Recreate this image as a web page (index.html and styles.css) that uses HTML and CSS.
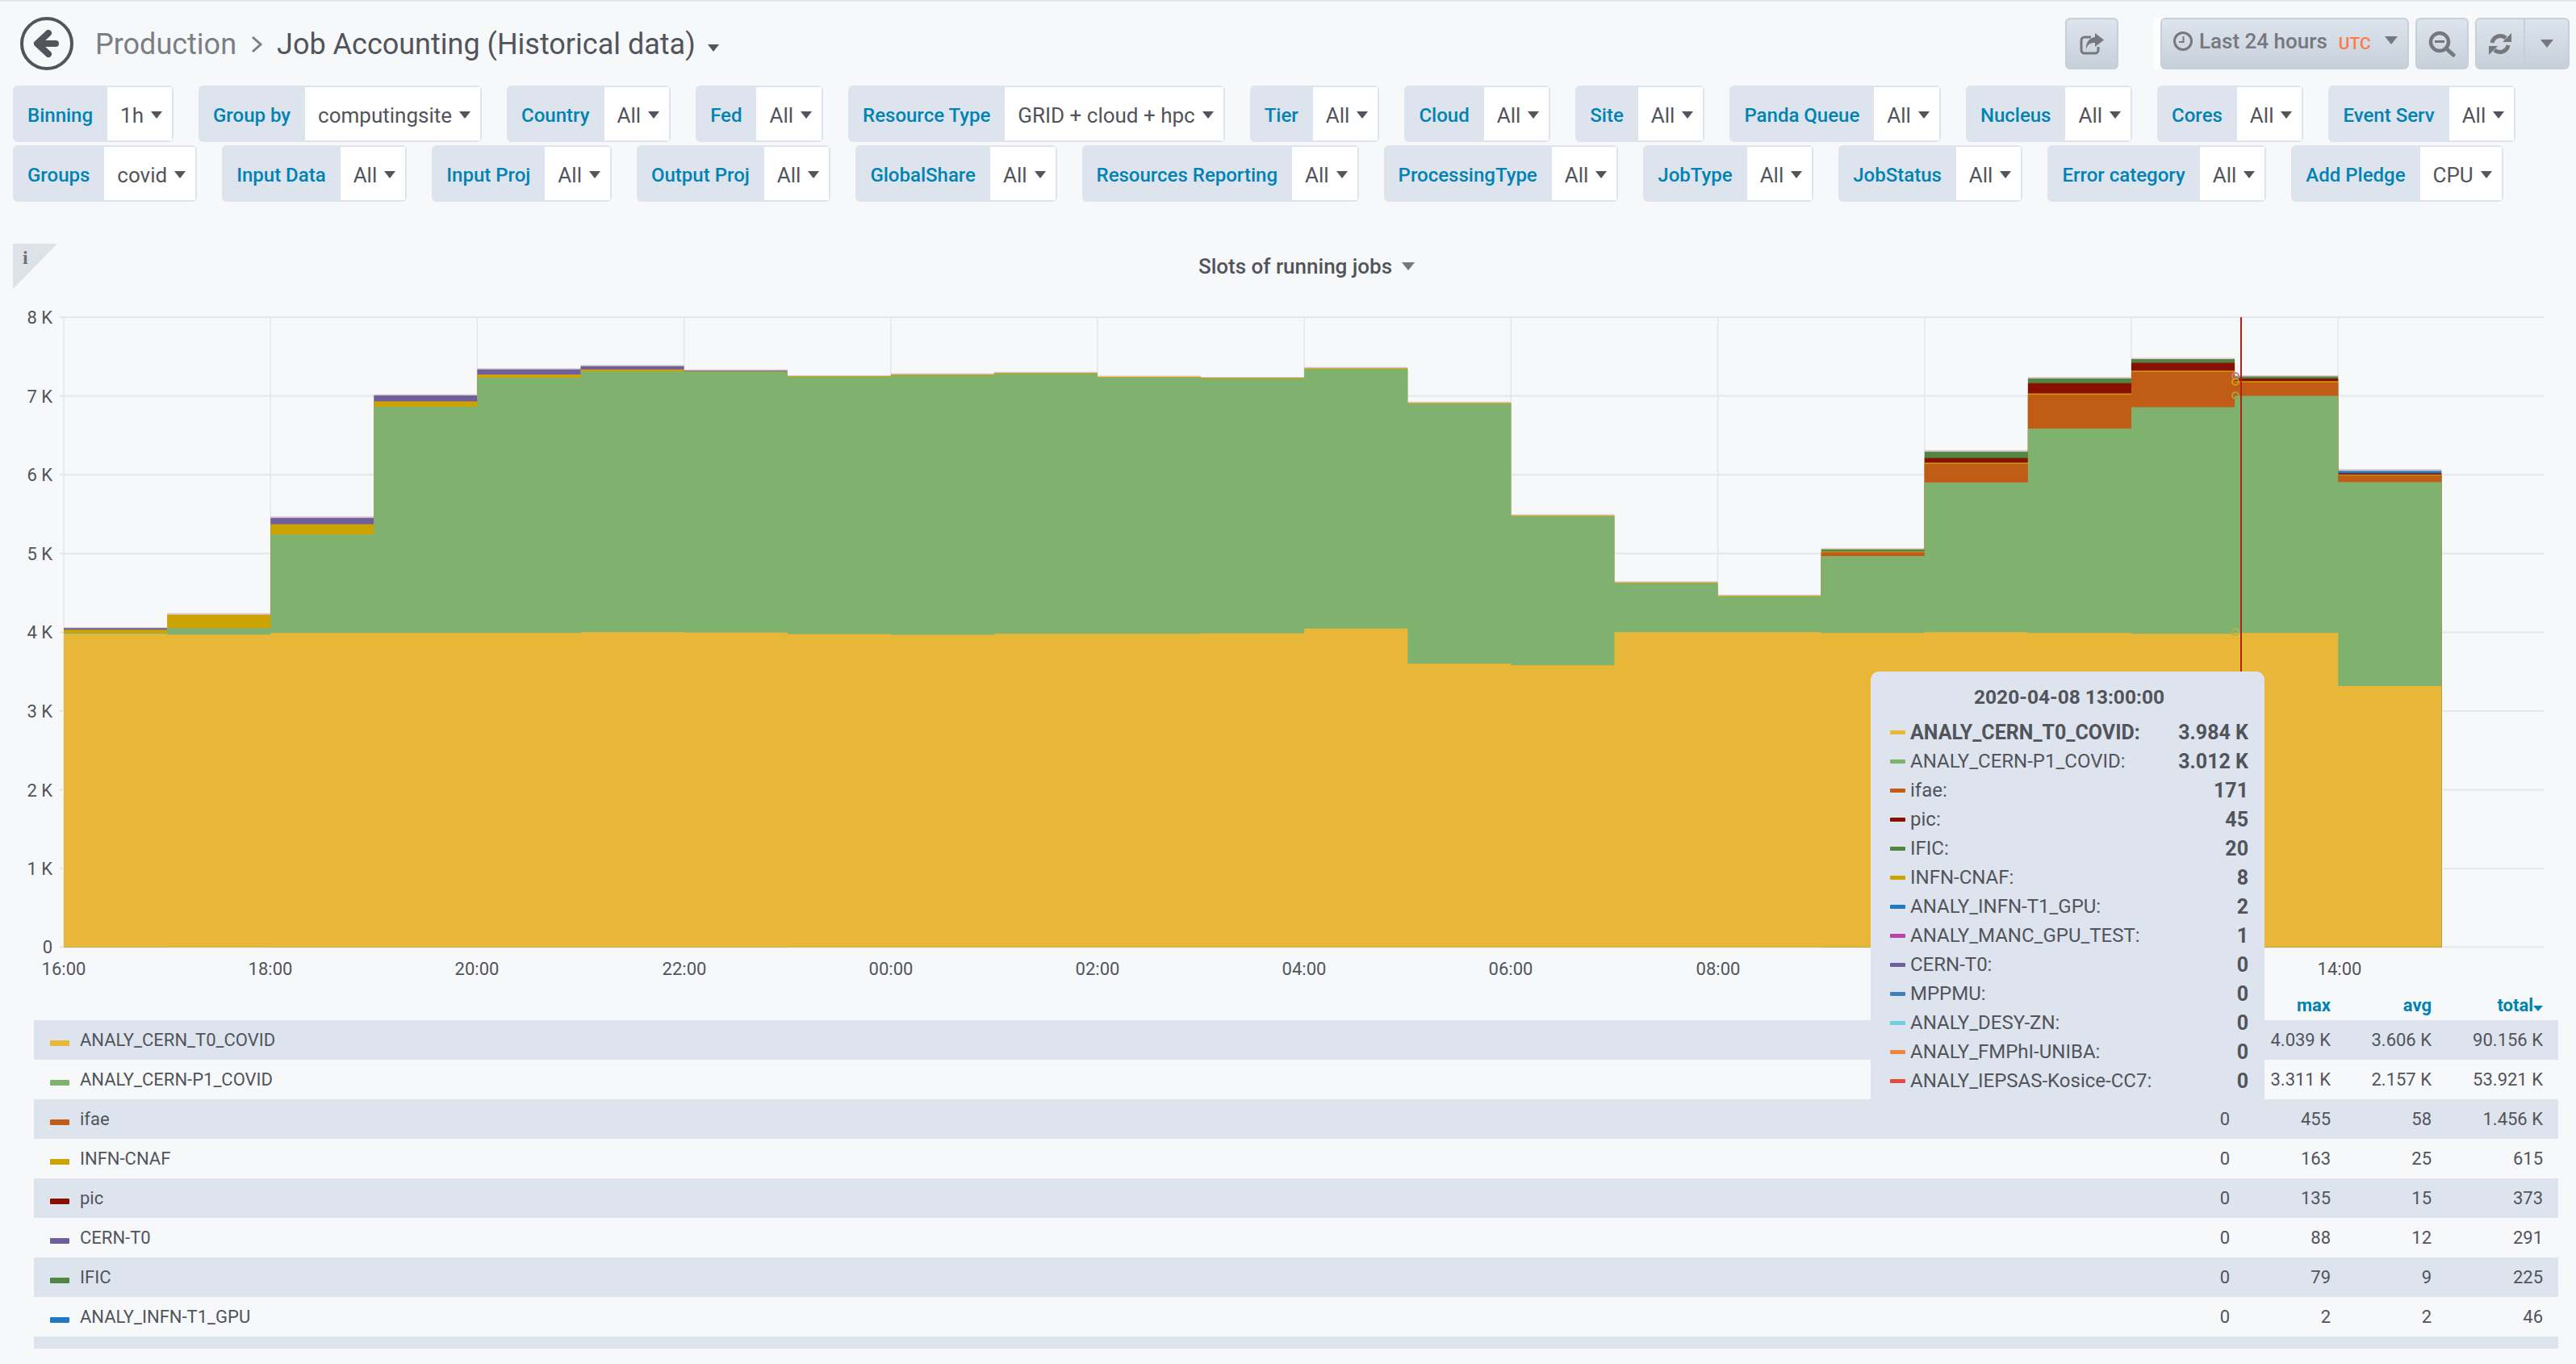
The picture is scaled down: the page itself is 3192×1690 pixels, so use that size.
FILE: index.html
```html
<!DOCTYPE html>
<html lang="en">
<head>
  <meta charset="UTF-8">
  <title>Job Accounting (Historical data)</title>
  <link rel="stylesheet" href="styles.css">
</head>
<body>
  <div class="top-line"></div>

  <div class="navbar">
    <svg class="back-icon" viewBox="0 0 66 68" width="66" height="68">
      <circle cx="33" cy="34" r="31" fill="none" stroke="#52545c" stroke-width="4"/>
      <path d="M35 21 L21 34 L35 47 M21 34 H44" fill="none" stroke="#52545c" stroke-width="8" stroke-linecap="round" stroke-linejoin="round"/>
    </svg>
    <span class="crumb">Production</span>
    <svg class="chevron" viewBox="0 0 14 22" width="14" height="22">
      <path d="M2 2 L12 11 L2 20" fill="none" stroke="#7b7e85" stroke-width="3"/>
    </svg>
    <span class="dash-title">Job Accounting (Historical data)</span>
    <i class="caret title-caret"></i>

    <div class="nav-actions">
      <button class="nav-btn share-btn">
        <svg viewBox="0 0 30 27" width="30" height="27">
          <path d="M14 5 H6 a4 4 0 0 0 -4 4 V21 a4 4 0 0 0 4 4 H19 a4 4 0 0 0 4 -4 V17" fill="none" stroke="#76787e" stroke-width="3"/>
          <path d="M19 0 L30 8.5 L19 17 V12 C13 12 9 14 8 21 C7 12 12 5.5 19 5 Z" fill="#76787e"/>
        </svg>
      </button>
      <div class="time-wrap">
        <button class="nav-btn time-btn">
          <svg class="clock" viewBox="0 0 24 24" width="24" height="24">
            <circle cx="12" cy="12" r="10.5" fill="none" stroke="#76787e" stroke-width="3"/>
            <path d="M12.5 6 V13 H7" fill="none" stroke="#76787e" stroke-width="2"/>
          </svg>
          <span class="time-text">Last 24 hours</span>
          <span class="utc">UTC</span>
          <i class="caret btn-caret time-caret"></i>
        </button>
      </div>
      <button class="nav-btn zoom-btn">
        <svg viewBox="0 0 36 36" width="36" height="36">
          <circle cx="16" cy="16" r="11" fill="none" stroke="#76787e" stroke-width="4.5"/>
          <path d="M24 24 L33 32" stroke="#76787e" stroke-width="5" stroke-linecap="round"/>
          <path d="M10 15.5 H22" stroke="#76787e" stroke-width="3"/>
        </svg>
      </button>
      <div class="nav-btn refresh-group">
        <span class="refresh-part">
          <svg viewBox="0 0 28 27" width="28" height="27">
            <path d="M4 12 A10.5 10.5 0 0 1 21 6" fill="none" stroke="#76787e" stroke-width="5"/>
            <path d="M28 0 V11 H17 Z" fill="#76787e"/>
            <path d="M24 15 A10.5 10.5 0 0 1 7 21" fill="none" stroke="#76787e" stroke-width="5"/>
            <path d="M0 27 V16 H11 Z" fill="#76787e"/>
          </svg>
        </span>
        <span class="refresh-caret"><i class="caret btn-caret"></i></span>
      </div>
    </div>
  </div>

  <div class="filter-row">
    <div class="filter"><span class="filter-label">Binning</span><span class="filter-value">1h<i class="caret"></i></span></div>
    <div class="filter"><span class="filter-label">Group by</span><span class="filter-value">computingsite<i class="caret"></i></span></div>
    <div class="filter"><span class="filter-label">Country</span><span class="filter-value">All<i class="caret"></i></span></div>
    <div class="filter"><span class="filter-label">Fed</span><span class="filter-value">All<i class="caret"></i></span></div>
    <div class="filter"><span class="filter-label">Resource Type</span><span class="filter-value">GRID + cloud + hpc<i class="caret"></i></span></div>
    <div class="filter"><span class="filter-label">Tier</span><span class="filter-value">All<i class="caret"></i></span></div>
    <div class="filter"><span class="filter-label">Cloud</span><span class="filter-value">All<i class="caret"></i></span></div>
    <div class="filter"><span class="filter-label">Site</span><span class="filter-value">All<i class="caret"></i></span></div>
    <div class="filter"><span class="filter-label">Panda Queue</span><span class="filter-value">All<i class="caret"></i></span></div>
    <div class="filter"><span class="filter-label">Nucleus</span><span class="filter-value">All<i class="caret"></i></span></div>
    <div class="filter"><span class="filter-label">Cores</span><span class="filter-value">All<i class="caret"></i></span></div>
    <div class="filter"><span class="filter-label">Event Serv</span><span class="filter-value">All<i class="caret"></i></span></div>
  </div>
  <div class="filter-row">
    <div class="filter"><span class="filter-label">Groups</span><span class="filter-value">covid<i class="caret"></i></span></div>
    <div class="filter"><span class="filter-label">Input Data</span><span class="filter-value">All<i class="caret"></i></span></div>
    <div class="filter"><span class="filter-label">Input Proj</span><span class="filter-value">All<i class="caret"></i></span></div>
    <div class="filter"><span class="filter-label">Output Proj</span><span class="filter-value">All<i class="caret"></i></span></div>
    <div class="filter"><span class="filter-label">GlobalShare</span><span class="filter-value">All<i class="caret"></i></span></div>
    <div class="filter"><span class="filter-label">Resources Reporting</span><span class="filter-value">All<i class="caret"></i></span></div>
    <div class="filter"><span class="filter-label">ProcessingType</span><span class="filter-value">All<i class="caret"></i></span></div>
    <div class="filter"><span class="filter-label">JobType</span><span class="filter-value">All<i class="caret"></i></span></div>
    <div class="filter"><span class="filter-label">JobStatus</span><span class="filter-value">All<i class="caret"></i></span></div>
    <div class="filter"><span class="filter-label">Error category</span><span class="filter-value">All<i class="caret"></i></span></div>
    <div class="filter"><span class="filter-label">Add Pledge</span><span class="filter-value">CPU<i class="caret"></i></span></div>
  </div>

  <div class="panel">
    <div class="info-corner"><span>i</span></div>
    <div class="panel-title">Slots of running jobs<i class="caret panel-caret"></i></div>

    <svg class="chart" viewBox="0 0 3192 862" width="3192" height="862">
      <path class="grid" d="M74 35H3152M74 132.6H3152M74 230.2H3152M74 327.8H3152M74 425.4H3152M74 523H3152M74 620.6H3152M74 718.2H3152M74 815.6H3152"/>
      <path class="grid grid-v" d="M79 35V816M335.2 35V816M591.4 35V816M847.6 35V816M1103.8 35V816M1360 35V816M1616.2 35V816M1872.4 35V816M2128.6 35V816M2384.8 35V816M2641 35V816M2897.2 35V816"/>

      <!-- x is hours from 16:00, y is thousands of slots, stacked series painted top down -->
      <g transform="translate(79 815.6) scale(128.1 -97.6)">
        <path fill="#d8c6c8" d="M0 0V4.06H1V4.24H2V5.47H3V7.02H4V7.35H5V7.39H6V7.335H7V7.26H8V7.285H9V7.305H10V7.255H11V7.24H12V7.365H13V6.925H14V5.495H15V4.645H16V4.475H17V5.065H18V6.31H19V7.24H20V7.48H21V7.26H22V6.07H23V0Z"/>
        <path fill="#1f78c1" d="M22 0V6.045H23V0Z"/>
        <path fill="#705da0" d="M0 0V4.05H1V0H2V5.45H3V7.005H4V7.335H5V7.375H6V7.32H7V0Z"/>
        <path fill="#508642" d="M17 0V5.05H18V6.29H19V7.22H20V7.465H21V7.245H22V0Z"/>
        <path fill="#890f02" d="M18 0V6.21H19V7.16H20V7.42H21V7.22H22V6.015H23V0Z"/>
        <path fill="#cca300" d="M0 0V4.03H1V4.22H2V5.37H3V6.93H4V7.27H5V7.335H6V7.31H7V7.25H8V7.27H9V7.29H10V7.24H11V7.23H12V7.35H13V6.91H14V5.48H15V4.63H16V4.46H17V5.025H18V6.15H19V7.03H20V7.32H21V7.185H22V6H23V0Z"/>
        <path fill="#c15c17" d="M17 0V5.015H18V6.135H19V7.015H20V7.305H21V7.17H22V5.99H23V0Z"/>
        <path fill="#80b26f" d="M0 0V3.99H1V4.05H2V5.24H3V6.86H4V7.23H5V7.31H6V7.305H7V7.24H8V7.26H9V7.28H10V7.23H11V7.22H12V7.34H13V6.9H14V5.47H15V4.62H16V4.45H17V4.965H18V5.9H19V6.585H20V6.855H21V7H22V5.905H23V0Z"/>
        <path fill="#e8b738" d="M0 0V3.98H1V3.97H2V3.99H5V4H6V3.995H7V3.975H8V3.965H9V3.98H11V3.985H12V4.046H13V3.6H14V3.58H15V4H17V3.99H18V4H19V3.99H20V3.98H21V3.99H22V3.315H23V0Z"/>
      </g>

      <path class="crosshair" d="M2777 35V815"/>
      <circle class="hover-dot" cx="2770" cy="108" r="4" stroke="#c77b90"/>
      <circle class="hover-dot" cx="2770" cy="115" r="4" stroke="#cc9a10"/>
      <circle class="hover-dot" cx="2770" cy="132" r="4" stroke="#a8a040"/>
      <circle class="hover-dot" cx="2770" cy="425" r="4" stroke="#b8b048"/>

      <g class="y-axis">
        <text x="65" y="43">8 K</text>
        <text x="65" y="141">7 K</text>
        <text x="65" y="238">6 K</text>
        <text x="65" y="336">5 K</text>
        <text x="65" y="433">4 K</text>
        <text x="65" y="531">3 K</text>
        <text x="65" y="629">2 K</text>
        <text x="65" y="726">1 K</text>
        <text x="65" y="823">0</text>
      </g>
      <g class="x-axis">
        <text x="79" y="850">16:00</text>
        <text x="335" y="850">18:00</text>
        <text x="591" y="850">20:00</text>
        <text x="848" y="850">22:00</text>
        <text x="1104" y="850">00:00</text>
        <text x="1360" y="850">02:00</text>
        <text x="1616" y="850">04:00</text>
        <text x="1872" y="850">06:00</text>
        <text x="2129" y="850">08:00</text>
        <text x="2899" y="850">14:00</text>
      </g>
    </svg>

    <div class="legend">
      <div class="legend-head">
        <span class="legend-name"></span>
        <span class="legend-num"></span>
        <span class="legend-num">max</span>
        <span class="legend-num">avg</span>
        <span class="legend-num legend-total">total<i class="caret total-caret"></i></span>
      </div>
      <div class="legend-row">
        <span class="legend-key s-t0"></span><span class="legend-name">ANALY_CERN_T0_COVID</span>
        <span class="legend-num"></span><span class="legend-num">4.039 K</span><span class="legend-num">3.606 K</span><span class="legend-num legend-total">90.156 K</span>
      </div>
      <div class="legend-row">
        <span class="legend-key s-p1"></span><span class="legend-name">ANALY_CERN-P1_COVID</span>
        <span class="legend-num"></span><span class="legend-num">3.311 K</span><span class="legend-num">2.157 K</span><span class="legend-num legend-total">53.921 K</span>
      </div>
      <div class="legend-row">
        <span class="legend-key s-ifae"></span><span class="legend-name">ifae</span>
        <span class="legend-num">0</span><span class="legend-num">455</span><span class="legend-num">58</span><span class="legend-num legend-total">1.456 K</span>
      </div>
      <div class="legend-row">
        <span class="legend-key s-cnaf"></span><span class="legend-name">INFN-CNAF</span>
        <span class="legend-num">0</span><span class="legend-num">163</span><span class="legend-num">25</span><span class="legend-num legend-total">615</span>
      </div>
      <div class="legend-row">
        <span class="legend-key s-pic"></span><span class="legend-name">pic</span>
        <span class="legend-num">0</span><span class="legend-num">135</span><span class="legend-num">15</span><span class="legend-num legend-total">373</span>
      </div>
      <div class="legend-row">
        <span class="legend-key s-cern"></span><span class="legend-name">CERN-T0</span>
        <span class="legend-num">0</span><span class="legend-num">88</span><span class="legend-num">12</span><span class="legend-num legend-total">291</span>
      </div>
      <div class="legend-row">
        <span class="legend-key s-ific"></span><span class="legend-name">IFIC</span>
        <span class="legend-num">0</span><span class="legend-num">79</span><span class="legend-num">9</span><span class="legend-num legend-total">225</span>
      </div>
      <div class="legend-row">
        <span class="legend-key s-gpu"></span><span class="legend-name">ANALY_INFN-T1_GPU</span>
        <span class="legend-num">0</span><span class="legend-num">2</span><span class="legend-num">2</span><span class="legend-num legend-total">46</span>
      </div>
      <div class="legend-row"></div>
    </div>

    <div class="tooltip">
      <div class="tooltip-title">2020-04-08 13:00:00</div>
      <div class="tooltip-row tooltip-hover"><span class="tooltip-key s-t0"></span><span class="tooltip-name">ANALY_CERN_T0_COVID:</span><b>3.984 K</b></div>
      <div class="tooltip-row"><span class="tooltip-key s-p1"></span><span class="tooltip-name">ANALY_CERN-P1_COVID:</span><b>3.012 K</b></div>
      <div class="tooltip-row"><span class="tooltip-key s-ifae"></span><span class="tooltip-name">ifae:</span><b>171</b></div>
      <div class="tooltip-row"><span class="tooltip-key s-pic"></span><span class="tooltip-name">pic:</span><b>45</b></div>
      <div class="tooltip-row"><span class="tooltip-key s-ific"></span><span class="tooltip-name">IFIC:</span><b>20</b></div>
      <div class="tooltip-row"><span class="tooltip-key s-cnaf"></span><span class="tooltip-name">INFN-CNAF:</span><b>8</b></div>
      <div class="tooltip-row"><span class="tooltip-key s-gpu"></span><span class="tooltip-name">ANALY_INFN-T1_GPU:</span><b>2</b></div>
      <div class="tooltip-row"><span class="tooltip-key s-manc"></span><span class="tooltip-name">ANALY_MANC_GPU_TEST:</span><b>1</b></div>
      <div class="tooltip-row"><span class="tooltip-key s-cern"></span><span class="tooltip-name">CERN-T0:</span><b>0</b></div>
      <div class="tooltip-row"><span class="tooltip-key s-mppmu"></span><span class="tooltip-name">MPPMU:</span><b>0</b></div>
      <div class="tooltip-row"><span class="tooltip-key s-desy"></span><span class="tooltip-name">ANALY_DESY-ZN:</span><b>0</b></div>
      <div class="tooltip-row"><span class="tooltip-key s-fmph"></span><span class="tooltip-name">ANALY_FMPhI-UNIBA:</span><b>0</b></div>
      <div class="tooltip-row"><span class="tooltip-key s-iepsas"></span><span class="tooltip-name">ANALY_IEPSAS-Kosice-CC7:</span><b>0</b></div>
    </div>
  </div>
</body>
</html>
```

FILE: styles.css
```css
* {
  box-sizing: border-box;
}
html, body {
  height: 100%;
}
body {
  margin: 0;
  overflow: hidden;
  font-family: Roboto, sans-serif;
  background-color: #f7f8fa;
  color: #52545c;
}
.top-line {
  height: 2px;
  background-color: #e3e5e8;
}
.caret {
  display: inline-block;
  width: 0;
  height: 0;
  border-left: 7px solid transparent;
  border-right: 7px solid transparent;
  border-top: 9px solid #52545c;
}

/* navbar */
.navbar {
  display: flex;
  align-items: center;
  height: 104px;
  padding: 0 8px 0 25px;
}
.back-icon {
  flex: none;
}
.crumb {
  margin-left: 27px;
  padding-top: 2px;
  font-size: 36px;
  color: #7b7e85;
}
.chevron {
  margin: 2px 18px 0 18px;
}
.dash-title {
  padding-top: 2px;
  font-size: 36px;
  color: #52545c;
}
.title-caret {
  margin: 10px 0 0 15px;
}
.nav-actions {
  display: flex;
  margin-left: auto;
}
.nav-btn {
  display: flex;
  align-items: center;
  justify-content: center;
  height: 64px;
  padding: 0;
  border: 2px solid #c7d0d9;
  border-radius: 6px;
  background: linear-gradient(to bottom, #dde4ed, #c7d0d9);
  font-family: Roboto, sans-serif;
}
.share-btn {
  width: 66px;
  margin-right: 44px;
}
.time-wrap {
  padding-left: 8px;
  background-color: #fff;
  margin-right: 8px;
}
.time-btn {
  width: 308px;
  justify-content: flex-start;
  padding: 0 0 6px 14px;
}
.time-text {
  margin-left: 8px;
  font-size: 26px;
  font-weight: 500;
  color: #76787e;
}
.utc {
  margin-left: 14px;
  margin-top: 6px;
  font-size: 21px;
  font-weight: 500;
  color: #ff7941;
}
.btn-caret {
  border-left-width: 8px;
  border-right-width: 8px;
  border-top: 10px solid #76787e;
}
.time-caret {
  margin-left: 17px;
  margin-bottom: 2px;
}
.zoom-btn {
  width: 66px;
  margin-right: 8px;
  padding-right: 3px;
}
.refresh-group {
  width: 117px;
  justify-content: flex-start;
}
.refresh-part {
  display: flex;
  align-items: center;
  justify-content: center;
  width: 60px;
  height: 100%;
  border-right: 2px solid #c7d0d9;
}
.refresh-caret {
  display: flex;
  justify-content: center;
  flex: 1;
}

/* template variables */
.filter-row {
  display: flex;
  gap: 31px;
  height: 70px;
  margin-bottom: 4px;
  padding-left: 16px;
}
.filter {
  display: flex;
  padding: 2px 2px 2px 0;
  border-radius: 6px;
  background-color: #dde4ed;
}
.filter-label {
  display: flex;
  align-items: center;
  padding: 3px 18px 0;
  font-size: 24px;
  font-weight: 500;
  color: #0083b3;
}
.filter-value {
  display: flex;
  align-items: center;
  padding: 3px 12px 0 16px;
  background-color: #fff;
  font-size: 26px;
  color: #52545c;
}
.filter-value .caret {
  margin-left: 9px;
  margin-top: -1px;
}

/* panel */
.panel {
  position: relative;
  margin-top: 52px;
}
.info-corner {
  position: absolute;
  top: 0;
  left: 16px;
  width: 55px;
  height: 56px;
  padding: 4px 0 0 12px;
  background-color: #dde1e8;
  clip-path: polygon(0 0, 100% 0, 0 100%);
  font-family: "Liberation Serif", serif;
  font-size: 24px;
  font-weight: 700;
  color: #6e7178;
}
.panel-title {
  display: flex;
  align-items: center;
  justify-content: center;
  height: 56px;
  padding-left: 46px;
  font-size: 26px;
  font-weight: 500;
  color: #52545c;
}
.panel-caret {
  margin-left: 12px;
  border-left-width: 8px;
  border-right-width: 8px;
  border-top: 10px solid #76787e;
}
.chart {
  display: block;
}
.grid {
  fill: none;
  stroke: #e4e6e9;
  stroke-width: 2;
}
.grid-v {
  stroke-width: 1.5;
}
.crosshair {
  stroke: #b3201a;
  stroke-width: 2;
}
.hover-dot {
  fill: none;
  stroke-width: 2;
}
.y-axis text,
.x-axis text {
  font-size: 22px;
  fill: #52545c;
}
.y-axis text {
  text-anchor: end;
}
.x-axis text {
  text-anchor: middle;
}

/* legend */
.legend {
  height: 451px;
  margin: 0 22px 0 42px;
  overflow: hidden;
}
.legend-head,
.legend-row {
  display: flex;
  align-items: center;
  padding: 0 19px 0 20px;
  font-size: 22px;
}
.legend-head {
  height: 44px;
  padding-top: 6px;
  font-weight: 700;
  color: #0083b3;
}
.legend-row {
  height: 49px;
}
.legend-row:nth-child(even) {
  background-color: #dde4ed;
}
.legend-key {
  flex: none;
  width: 24px;
  height: 7px;
  margin-top: 8px;
  border-radius: 1px;
}
.legend-name {
  flex: 1;
  margin-left: 13px;
}
.legend-num {
  width: 125px;
  text-align: right;
}
.legend-total {
  width: 138px;
}
.total-caret {
  margin-left: 0;
  border-left-width: 6px;
  border-right-width: 6px;
  border-top: 7px solid #0083b3;
}

/* tooltip */
.tooltip {
  position: absolute;
  top: 530px;
  left: 2318px;
  width: 488px;
  height: 530px;
  padding: 14px 20px 0 24px;
  border-radius: 10px 10px 0 0;
  background-color: #dde4ed;
  font-size: 24px;
}
.tooltip-title {
  height: 43px;
  line-height: 36px;
  text-align: center;
  font-size: 24.5px;
  font-weight: 700;
}
.tooltip-row {
  display: flex;
  align-items: center;
  height: 36px;
}
.tooltip-row b {
  font-size: 25px;
  font-weight: 700;
}
.tooltip-hover .tooltip-name {
  font-size: 25px;
  font-weight: 700;
}
.tooltip-key {
  flex: none;
  width: 19px;
  height: 5px;
  margin-right: 6px;
  border-radius: 1px;
}
.tooltip-name {
  flex: 1;
}

/* series colours */
.s-t0 { background-color: #eab839; }
.s-p1 { background-color: #7eb26d; }
.s-ifae { background-color: #c15c17; }
.s-cnaf { background-color: #cca300; }
.s-pic { background-color: #890f02; }
.s-cern { background-color: #705da0; }
.s-ific { background-color: #508642; }
.s-gpu { background-color: #1f78c1; }
.s-manc { background-color: #ba43a9; }
.s-mppmu { background-color: #447ebc; }
.s-desy { background-color: #6ed0e0; }
.s-fmph { background-color: #ef843c; }
.s-iepsas { background-color: #e24d42; }
```
